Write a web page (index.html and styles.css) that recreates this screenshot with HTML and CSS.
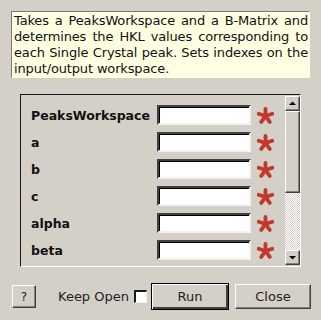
FILE: index.html
```html
<!DOCTYPE html>
<html>
<head>
<meta charset="utf-8">
<link rel="stylesheet" href="styles.css">
</head>
<body>
<div class="dialog">
  <div class="desc">Takes a PeaksWorkspace and a B-Matrix and determines the HKL values corresponding to each Single Crystal peak. Sets indexes on the input/output workspace.</div>
  <div class="panel">
    <div class="rows">
      <div class="row"><span class="label">PeaksWorkspace</span><span class="field"></span><svg class="star" viewBox="0 0 16 16"><g stroke="#c0392b" stroke-width="3.6" stroke-linecap="round"><line x1="8" y1="8.5" x2="8" y2="1.8"/><line x1="8" y1="8.5" x2="14.4" y2="6.4"/><line x1="8" y1="8.5" x2="1.6" y2="6.4"/><line x1="8" y1="8.5" x2="12" y2="14"/><line x1="8" y1="8.5" x2="4" y2="14"/></g></svg></div>
      <div class="row"><span class="label">a</span><span class="field"></span><svg class="star" viewBox="0 0 16 16"><g stroke="#c0392b" stroke-width="3.6" stroke-linecap="round"><line x1="8" y1="8.5" x2="8" y2="1.8"/><line x1="8" y1="8.5" x2="14.4" y2="6.4"/><line x1="8" y1="8.5" x2="1.6" y2="6.4"/><line x1="8" y1="8.5" x2="12" y2="14"/><line x1="8" y1="8.5" x2="4" y2="14"/></g></svg></div>
      <div class="row"><span class="label">b</span><span class="field"></span><svg class="star" viewBox="0 0 16 16"><g stroke="#c0392b" stroke-width="3.6" stroke-linecap="round"><line x1="8" y1="8.5" x2="8" y2="1.8"/><line x1="8" y1="8.5" x2="14.4" y2="6.4"/><line x1="8" y1="8.5" x2="1.6" y2="6.4"/><line x1="8" y1="8.5" x2="12" y2="14"/><line x1="8" y1="8.5" x2="4" y2="14"/></g></svg></div>
      <div class="row"><span class="label">c</span><span class="field"></span><svg class="star" viewBox="0 0 16 16"><g stroke="#c0392b" stroke-width="3.6" stroke-linecap="round"><line x1="8" y1="8.5" x2="8" y2="1.8"/><line x1="8" y1="8.5" x2="14.4" y2="6.4"/><line x1="8" y1="8.5" x2="1.6" y2="6.4"/><line x1="8" y1="8.5" x2="12" y2="14"/><line x1="8" y1="8.5" x2="4" y2="14"/></g></svg></div>
      <div class="row"><span class="label">alpha</span><span class="field"></span><svg class="star" viewBox="0 0 16 16"><g stroke="#c0392b" stroke-width="3.6" stroke-linecap="round"><line x1="8" y1="8.5" x2="8" y2="1.8"/><line x1="8" y1="8.5" x2="14.4" y2="6.4"/><line x1="8" y1="8.5" x2="1.6" y2="6.4"/><line x1="8" y1="8.5" x2="12" y2="14"/><line x1="8" y1="8.5" x2="4" y2="14"/></g></svg></div>
      <div class="row"><span class="label">beta</span><span class="field"></span><svg class="star" viewBox="0 0 16 16"><g stroke="#c0392b" stroke-width="3.6" stroke-linecap="round"><line x1="8" y1="8.5" x2="8" y2="1.8"/><line x1="8" y1="8.5" x2="14.4" y2="6.4"/><line x1="8" y1="8.5" x2="1.6" y2="6.4"/><line x1="8" y1="8.5" x2="12" y2="14"/><line x1="8" y1="8.5" x2="4" y2="14"/></g></svg></div>
    </div>
    <div class="scrollbar">
      <div class="sbtn"><svg viewBox="0 0 13 13" width="13" height="13"><polygon points="3,8 10,8 6.5,4.5" fill="#000"/></svg></div>
      <div class="thumb"></div>
      <div class="track"></div>
      <div class="sbtn"><svg viewBox="0 0 13 13" width="13" height="13"><polygon points="3,5 10,5 6.5,8.5" fill="#000"/></svg></div>
    </div>
  </div>
  <div class="buttons">
    <div class="btn help">?</div>
    <div class="keep">Keep Open <span class="check"></span></div>
    <div class="btn run">Run</div>
    <div class="btn close">Close</div>
  </div>
</div>
</body>
</html>
```
FILE: styles.css
```css
html, body {
  margin: 0;
  padding: 0;
  background: #d4d0c8;
}
body {
  width: 321px;
  height: 320px;
  overflow: hidden;
  font-family: "DejaVu Sans", sans-serif;
  font-size: 13px;
  color: #000;
}
.dialog {
  padding-top: 11px;
}
.desc {
  margin-left: 11px;
  width: 294px;
  height: 63px;
  padding: 1px 1px 1px 2px;
  background: #ffffe1;
  border-top: 1px solid #7a7a7a;
  border-left: 1px solid #7a7a7a;
  border-right: 1px solid #ffffe1;
  border-bottom: 1px solid #ffffe1;
  line-height: 16px;
  letter-spacing: -0.15px;
  text-align: justify;
  color: #111;
}
.panel {
  margin-top: 16px;
  margin-left: 20px;
  width: 279px;
  height: 171px;
  border-top: 1px solid #1a1a1a;
  border-left: 1px solid #1a1a1a;
  border-right: 1px solid #ffffff;
  border-bottom: 1px solid #ffffff;
  display: flex;
  overflow: hidden;
}
.rows {
  flex: 1;
  padding-top: 10px;
  padding-left: 10px;
  display: flex;
  flex-direction: column;
  gap: 7px;
}
.row {
  display: flex;
  align-items: center;
  height: 20px;
}
.label {
  width: 126px;
  font-weight: bold;
  font-size: 12.5px;
  color: #111;
}
.field {
  box-sizing: border-box;
  width: 94px;
  height: 20px;
  background: #fff;
  border-top: 2px solid #404040;
  border-left: 2px solid #404040;
  border-right: 2px solid #f4f2ee;
  border-bottom: 2px solid #f4f2ee;
  box-shadow: inset 1px 1px 0 #000;
}
.star {
  width: 17px;
  height: 17px;
  margin-left: 6px;
}
.scrollbar {
  width: 15px;
  margin: 1px 0 1px 0;
  display: flex;
  flex-direction: column;
}
.sbtn, .thumb {
  box-sizing: border-box;
  background: #d4d0c8;
  border-top: 1px solid #ffffff;
  border-left: 1px solid #ffffff;
  border-right: 1px solid #404040;
  border-bottom: 1px solid #404040;
  box-shadow: inset -1px -1px 0 #808080;
}
.sbtn {
  height: 15px;
  display: flex;
  align-items: center;
  justify-content: center;
}
.thumb {
  height: 82px;
}
.track {
  flex: 1;
  background-color: #d4d0c8;
  background-image:
    linear-gradient(45deg, #fff 25%, transparent 25%, transparent 75%, #fff 75%),
    linear-gradient(45deg, #fff 25%, transparent 25%, transparent 75%, #fff 75%);
  background-size: 2px 2px;
  background-position: 0 0, 1px 1px;
}
.buttons {
  margin-top: 16px;
  display: flex;
  align-items: center;
  padding-left: 12px;
}
.btn {
  box-sizing: border-box;
  display: flex;
  align-items: center;
  justify-content: center;
  background: #d4d0c8;
  border-top: 1px solid #ffffff;
  border-left: 1px solid #ffffff;
  border-right: 1px solid #404040;
  border-bottom: 1px solid #404040;
  box-shadow: inset -1px -1px 0 #808080;
  color: #222;
}
.help {
  width: 24px;
  height: 23px;
  font-size: 12px;
}
.keep {
  margin-left: 22px;
  display: flex;
  align-items: center;
  color: #222;
}
.check {
  display: inline-block;
  box-sizing: border-box;
  width: 13px;
  height: 13px;
  margin-left: 5px;
  background: #fff;
  border-top: 2px solid #1a1a1a;
  border-left: 2px solid #1a1a1a;
  border-right: 1px solid #f4f2ee;
  border-bottom: 1px solid #f4f2ee;
}
.run {
  margin-left: 4px;
  width: 78px;
  height: 27px;
  border: 1px solid #000;
  box-shadow: inset 1px 1px 0 #fff, inset -2px -2px 0 #404040;
}
.close {
  margin-left: 6px;
  width: 76px;
  height: 25px;
}
```
